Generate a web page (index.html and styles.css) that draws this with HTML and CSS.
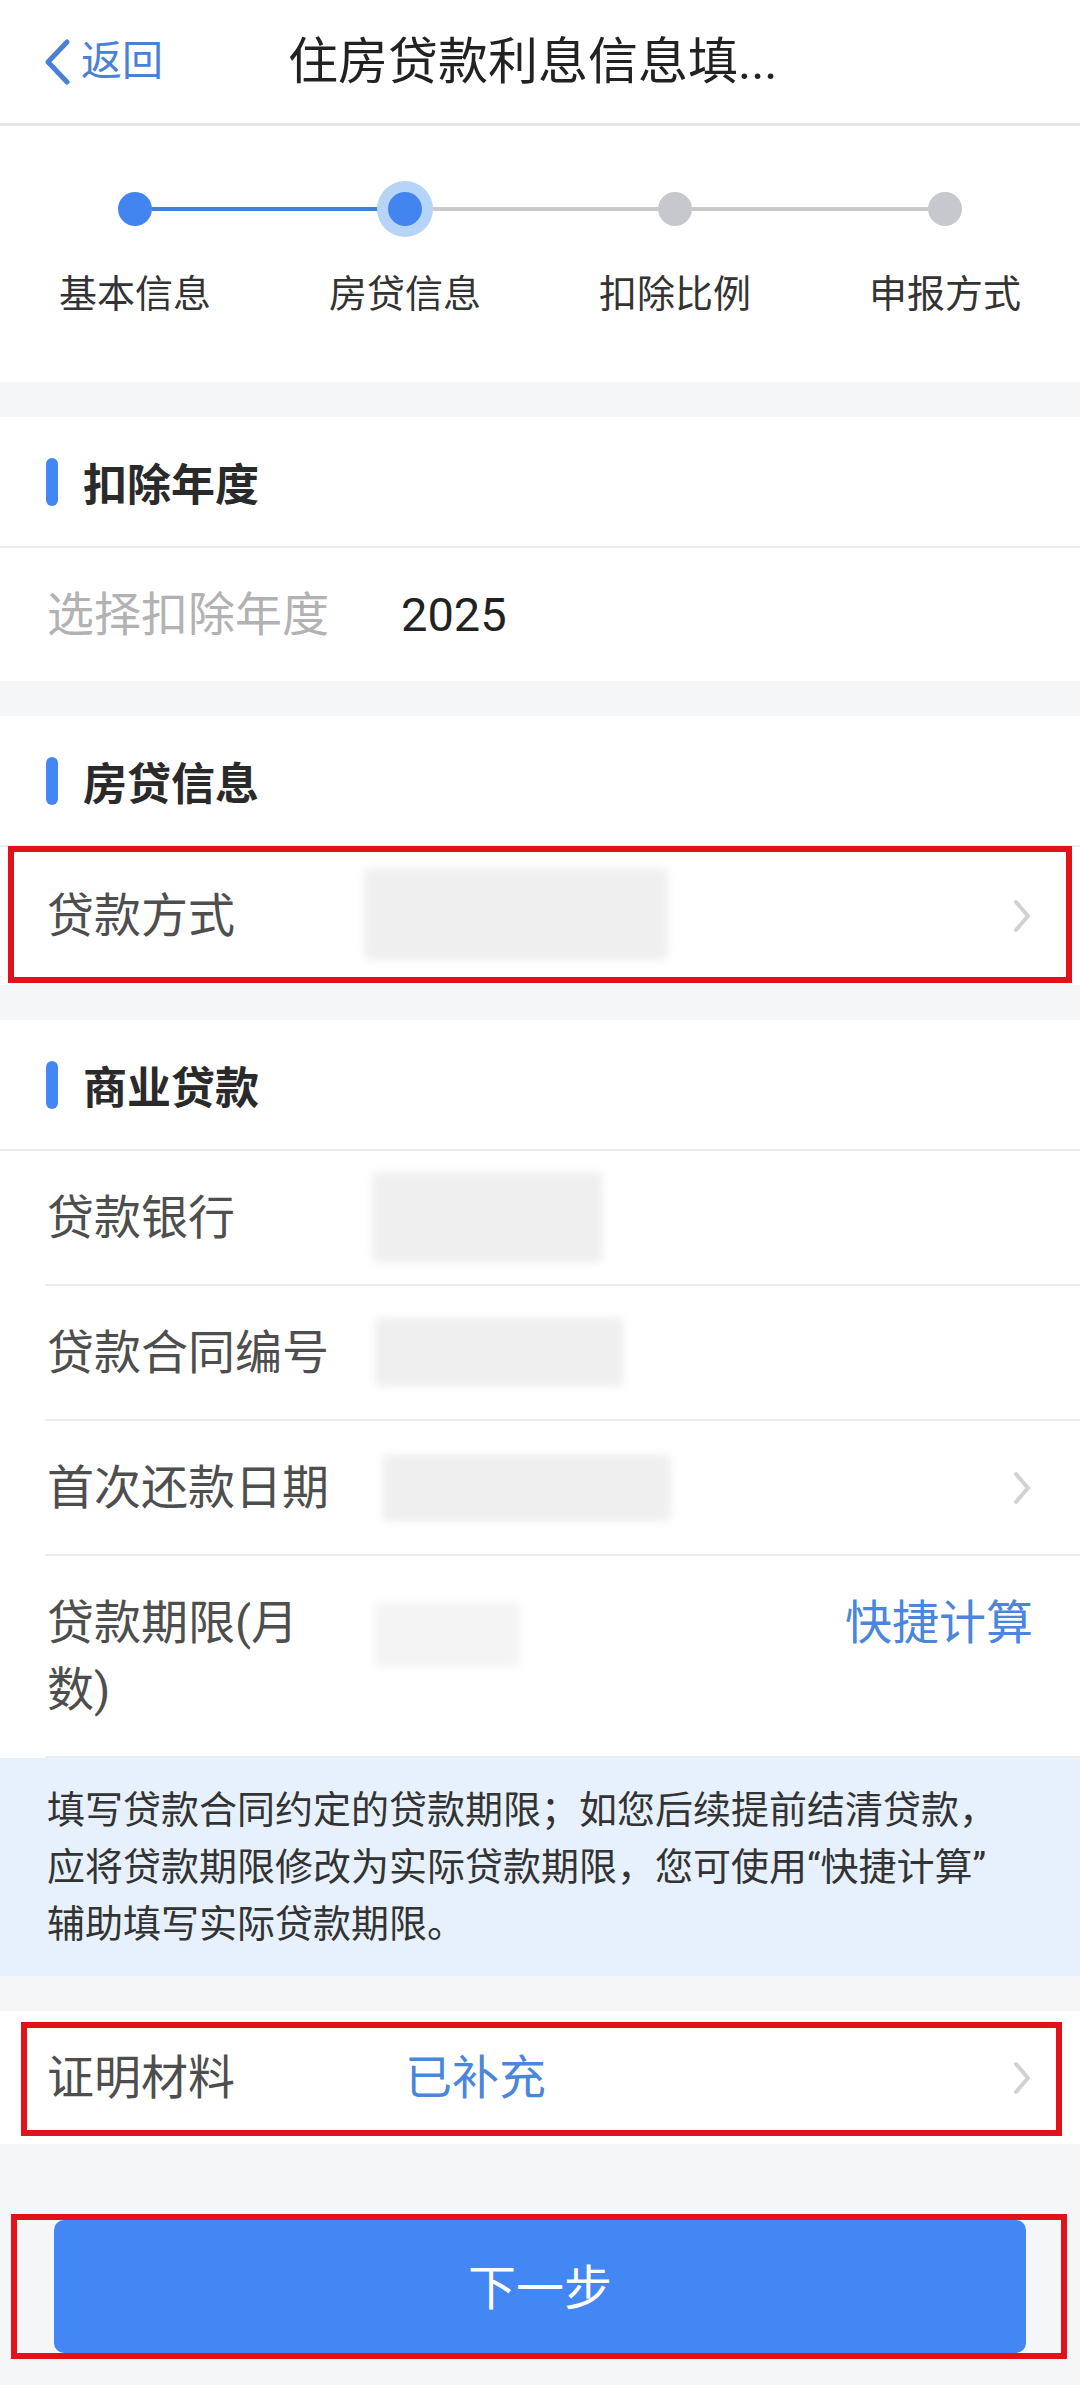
FILE: index.html
```html
<!DOCTYPE html>
<html lang="zh-CN">
<head>
<meta charset="utf-8">
<title>住房贷款利息信息填写</title>
<link rel="stylesheet" href="styles.css">
</head>
<body>
<div class="page">
  <header class="topbar">
    <a class="back">
      <svg class="back-icon" width="28" height="46" viewBox="0 0 28 46"><polyline points="24,3 5,23 24,43" fill="none" stroke="#4a80d8" stroke-width="5" stroke-linecap="round" stroke-linejoin="round"/></svg>
      <span>返回</span>
    </a>
    <h1 class="title">住房贷款利息信息填...</h1>
  </header>

  <section class="stepper">
    <div class="step">
      <div class="track"><span class="seg none"></span><span class="dot done"></span><span class="seg blue"></span></div>
      <div class="step-label">基本信息</div>
    </div>
    <div class="step">
      <div class="track"><span class="seg blue"></span><span class="dot current"></span><span class="seg gray"></span></div>
      <div class="step-label">房贷信息</div>
    </div>
    <div class="step">
      <div class="track"><span class="seg gray"></span><span class="dot todo"></span><span class="seg gray"></span></div>
      <div class="step-label">扣除比例</div>
    </div>
    <div class="step">
      <div class="track"><span class="seg gray"></span><span class="dot todo"></span><span class="seg none"></span></div>
      <div class="step-label">申报方式</div>
    </div>
  </section>

  <section class="card">
    <div class="card-head"><span class="bar"></span>扣除年度</div>
    <div class="row">
      <span class="label muted">选择扣除年度</span>
      <span class="value num">2025</span>
    </div>
  </section>

  <section class="card">
    <div class="card-head"><span class="bar"></span>房贷信息</div>
    <div class="row row-tall">
      <span class="label">贷款方式</span>
      <span class="blur blur-method"></span>
      <svg class="chev" width="22" height="34" viewBox="0 0 22 34"><polyline points="5,3 17,17 5,31" fill="none" stroke="#d2d2d2" stroke-width="4" stroke-linecap="round" stroke-linejoin="round"/></svg>
      <span class="annot annot-method"></span>
    </div>
  </section>

  <section class="card">
    <div class="card-head"><span class="bar"></span>商业贷款</div>
    <div class="row">
      <span class="label">贷款银行</span>
      <span class="blur blur-bank"></span>
    </div>
    <div class="row">
      <span class="label">贷款合同编号</span>
      <span class="blur blur-contract"></span>
    </div>
    <div class="row">
      <span class="label">首次还款日期</span>
      <span class="blur blur-date"></span>
      <svg class="chev" width="22" height="34" viewBox="0 0 22 34"><polyline points="5,3 17,17 5,31" fill="none" stroke="#d2d2d2" stroke-width="4" stroke-linecap="round" stroke-linejoin="round"/></svg>
    </div>
    <div class="row row-top row-end">
      <span class="label">贷款期限(月数)</span>
      <span class="blur blur-term"></span>
      <span class="link">快捷计算</span>
    </div>
    <div class="tip">填写贷款合同约定的贷款期限；如您后续提前结清贷款，应将贷款期限修改为实际贷款期限，您可使用“快捷计算”辅助填写实际贷款期限。</div>
  </section>

  <section class="card">
    <div class="row row-solo">
      <span class="label">证明材料</span>
      <span class="value link-value">已补充</span>
      <svg class="chev" width="22" height="34" viewBox="0 0 22 34"><polyline points="5,3 17,17 5,31" fill="none" stroke="#d2d2d2" stroke-width="4" stroke-linecap="round" stroke-linejoin="round"/></svg>
      <span class="annot annot-proof"></span>
    </div>
  </section>

  <div class="actions">
    <button class="next">下一步<span class="annot annot-btn"></span></button>
  </div>
</div>
</body>
</html>
```

FILE: styles.css
```css
* { box-sizing: border-box; }
html, body { margin: 0; padding: 0; }
body {
  background: #f5f6f8;
  font-family: Roboto, "Noto Sans CJK SC", sans-serif;
  color: #333;
}
.page { width: 1080px; min-height: 2385px; background: #f5f6f8; }

/* top bar */
.topbar {
  height: 126px;
  background: #fff;
  border-bottom: 3px solid #e4e4e4;
  display: flex;
  align-items: center;
}
.back {
  display: flex;
  align-items: center;
  margin-left: 43px;
  color: #4a80d8;
  font-size: 41px;
  line-height: 1;
  gap: 10px;
}
.title {
  margin: 0 0 0 125px;
  font-size: 50px;
  font-weight: 400;
  color: #222;
  line-height: 1;
  white-space: nowrap;
}

/* stepper */
.stepper {
  background: #fff;
  display: flex;
  padding: 66px 0 61px;
}
.step { width: 270px; display: flex; flex-direction: column; align-items: center; }
.track { width: 100%; height: 34px; display: flex; align-items: center; }
.seg { flex: 1; height: 4px; }
.seg.blue { background: #3f80d8; }
.seg.gray { background: #cacaca; }
.seg.none { background: transparent; }
.dot {
  width: 34px; height: 34px; border-radius: 50%;
  flex-shrink: 0;
  position: relative;
  z-index: 1;
}
.dot.done, .dot.current { background: #4285f0; }
.dot.current { box-shadow: 0 0 0 11px #b6d4f7; }
.dot.todo { background: #c6c8ce; }
.step-label {
  margin-top: 42px;
  font-size: 38px;
  line-height: 53px;
  color: #333;
}

/* cards */
.card { background: #fff; margin-top: 35px; }
.card-head {
  height: 131px;
  display: flex;
  align-items: center;
  padding-left: 46px;
  border-bottom: 2px solid #ececec;
  font-size: 44px;
  font-weight: 700;
  color: #2a2a2a;
}
.bar {
  width: 12px; height: 48px; border-radius: 6px;
  background: #4287f5;
  margin-right: 25px;
}
.row {
  position: relative;
  display: flex;
  align-items: center;
  margin-left: 45px;
  padding: 33px 47px 33px 2px;
  font-size: 47px;
  line-height: 67px;
}
.row + .row { border-top: 2px solid #ececec; }
.row-tall { padding-top: 35px; padding-bottom: 36px; }
.row-top { align-items: flex-start; }
.row-end { border-bottom: 2px solid #ececec; }
.label { flex: 0 0 290px; color: #4e4e4e; }
.label.muted { color: #b2b2b2; }
.value { margin-left: 64px; }
.num { color: #222; font-size: 47px; }
.link-value { color: #4a86dc; margin-left: 68px; }
.link { margin-left: auto; color: #4a86dc; }
.chev { margin-left: auto; display: block; }

.blur {
  display: block;
  background: #efefef;
  filter: blur(4px);
  border-radius: 6px;
}
.blur-method { width: 304px; height: 92px; margin: -14px 0 -11px 27px; }
.blur-bank { width: 231px; height: 90px; margin: -12px 0 -11px 35px; }
.blur-contract { width: 248px; height: 70px; margin: -2px 0 -1px 38px; }
.blur-date { width: 289px; height: 66px; margin: 0 0 0 45px; }
.blur-term { width: 145px; height: 65px; margin: 13px 0 0 38px; background: #f4f4f4; }

.tip {
  background: #e7f1fd;
  padding: 24px 60px 23px 47px;
  font-size: 38px;
  line-height: 57px;
  color: #333;
}

/* annotations */
.annot {
  position: absolute;
  border: 6px solid #e3121a;
  pointer-events: none;
}
.annot-method { top: -1px; bottom: 2px; left: -37px; right: 8px; }
.annot-proof { top: 11px; bottom: 8px; left: -24px; right: 18px; }
.row-solo { margin-top: 0; }

/* action */
.actions { padding: 76px 54px 0; }
.next {
  position: relative;
  display: block;
  width: 972px;
  height: 133px;
  border: 0;
  border-radius: 10px;
  background: #4287f3;
  color: #fff;
  font-family: Roboto, "Noto Sans CJK SC", sans-serif;
  font-size: 48px;
  padding: 0 0 6px;
}
.annot-btn { top: -6px; bottom: -6px; left: -43px; right: -41px; }
```
